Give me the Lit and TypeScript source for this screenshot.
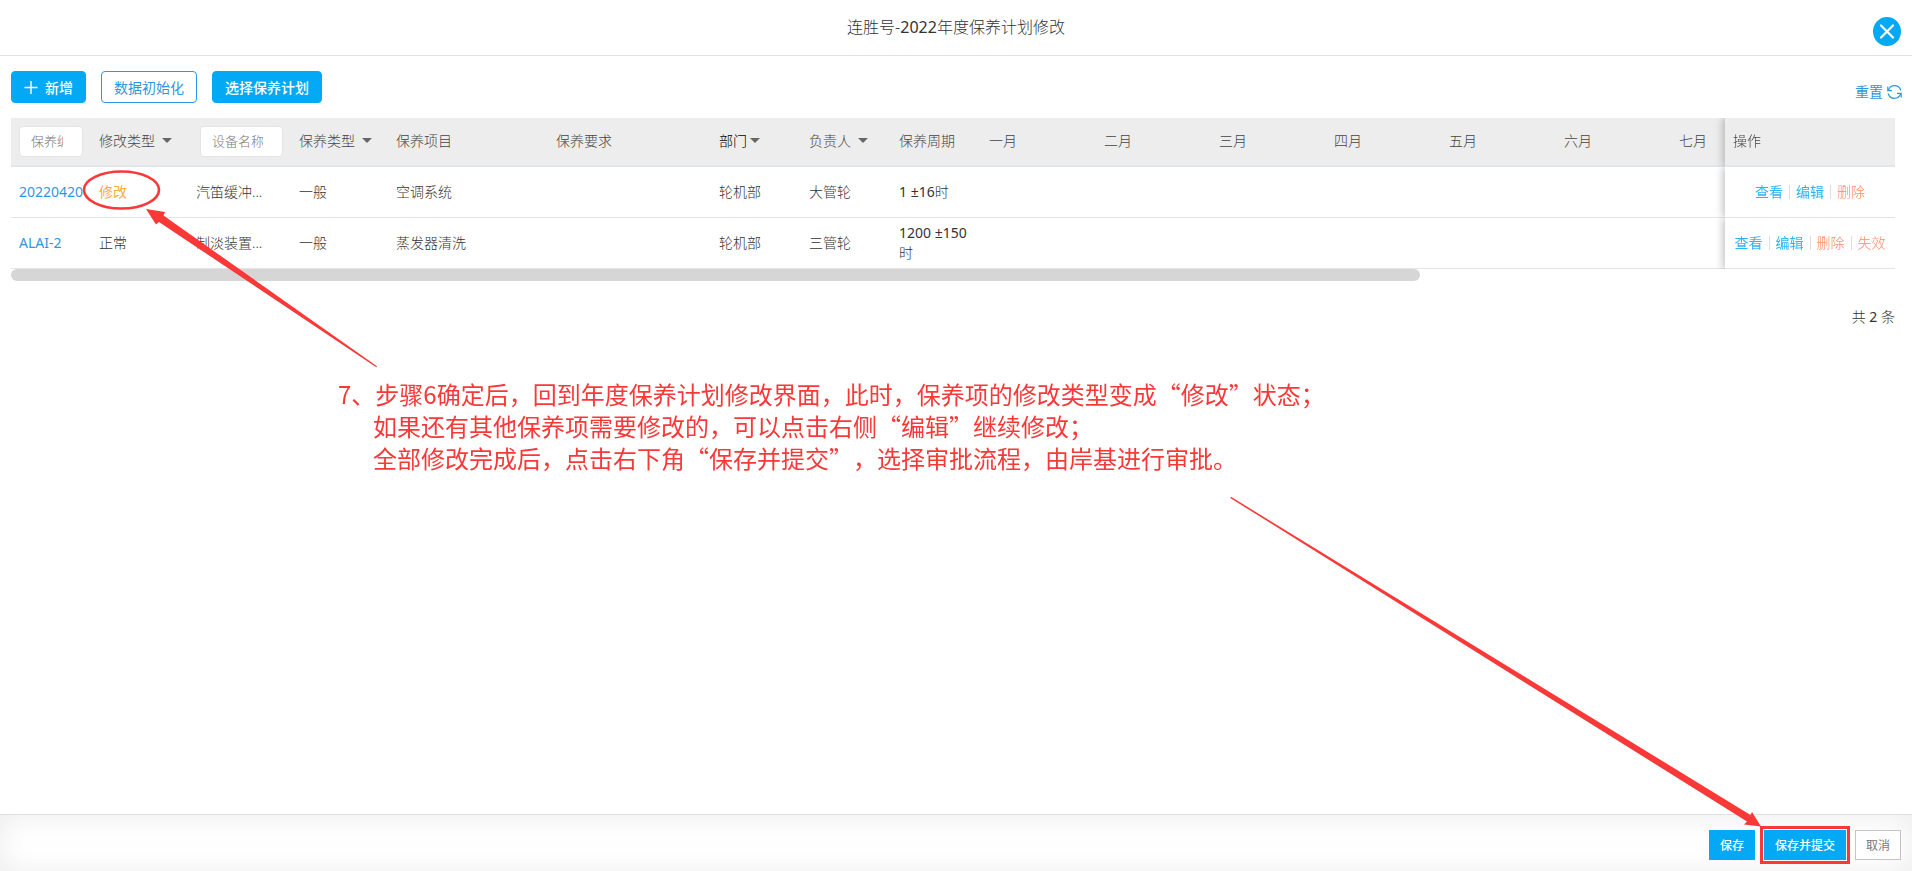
import { LitElement, html, css, svg } from "lit";
import { customElement, state } from "lit/decorators.js";
import { classMap } from "lit/directives/class-map.js";

interface Column {
  label: string;
  width: number;
  kind?: "input" | "menu";
  strong?: boolean;
}

interface PlanRow {
  code: string;
  change: string;
  changed: boolean;
  device: string;
  type: string;
  item: string;
  demand: string;
  dept: string;
  owner: string;
  cycle: string;
  unit: string;
  actions: string[];
}

const MONTHS = ["一月", "二月", "三月", "四月", "五月", "六月", "七月", "八月", "九月", "十月", "十一月", "十二月"];

const COLUMNS: Column[] = [
  { label: "保养编号", width: 80, kind: "input" },
  { label: "修改类型", width: 97, kind: "menu" },
  { label: "设备名称", width: 103, kind: "input" },
  { label: "保养类型", width: 97, kind: "menu" },
  { label: "保养项目", width: 160 },
  { label: "保养要求", width: 163 },
  { label: "部门", width: 90, kind: "menu", strong: true },
  { label: "负责人", width: 90, kind: "menu" },
  { label: "保养周期", width: 90 },
  ...MONTHS.map((label) => ({ label, width: 115 })),
];

const ACTION_WIDTH = 170;
const TABLE_WIDTH = COLUMNS.reduce((sum, c) => sum + c.width, ACTION_WIDTH);

const ROWS: PlanRow[] = [
  {
    code: "20220420",
    change: "修改",
    changed: true,
    device: "汽笛缓冲...",
    type: "一般",
    item: "空调系统",
    demand: "",
    dept: "轮机部",
    owner: "大管轮",
    cycle: "1 ±16",
    unit: "时",
    actions: ["查看", "编辑", "删除"],
  },
  {
    code: "ALAI-2",
    change: "正常",
    changed: false,
    device: "制淡装置...",
    type: "一般",
    item: "蒸发器清洗",
    demand: "",
    dept: "轮机部",
    owner: "三管轮",
    cycle: "1200 ±150",
    unit: "时",
    actions: ["查看", "编辑", "删除", "失效"],
  },
];

@customElement("plan-table")
export class PlanTable extends LitElement {
  @state() private ratio = 1;
  @state() private offset = 0;
  private observer?: ResizeObserver;

  static styles = css`
    :host {
      display: block;
    }
    .viewport {
      overflow-x: auto;
      scrollbar-width: none;
    }
    table {
      table-layout: fixed;
      border-collapse: separate;
      border-spacing: 0;
      line-height: 20px;
    }
    th,
    td {
      box-sizing: border-box;
      padding: 0 8px;
      text-align: left;
      font-weight: 300;
      overflow: hidden;
      white-space: nowrap;
      background: #fff;
    }
    th {
      height: 49px;
      padding-bottom: 2px;
      background: #ededed;
      border-bottom: 2px solid #e1e6eb;
      color: #444;
    }
    td {
      height: 51px;
      border-bottom: 1px solid #e2e4e6;
    }
    .input-head {
      padding-bottom: 0;
    }
    .device-filter {
      padding-left: 12px;
    }
    .cycle {
      white-space: normal;
    }
    .figure {
      font-weight: 400;
      color: #333;
    }
    .pinned {
      position: sticky;
      right: 0;
      overflow: visible;
      box-shadow: -2px 0 8px rgba(0, 0, 0, 0.25);
      clip-path: inset(0 0 0 -12px);
    }
    .filter {
      box-sizing: border-box;
      display: block;
      width: 100%;
      height: 31px;
      padding: 0 19px 2px 11px;
      border: 1px solid #e2e4e6;
      border-radius: 4px;
      background: #fff;
      font: inherit;
      font-size: 13px;
      color: #555;
    }
    .device-filter .filter {
      width: 83px;
    }
    .filter::placeholder {
      color: #777;
      opacity: 1;
    }
    .menu {
      display: flex;
      align-items: center;
      gap: 7px;
      padding: 0;
      border: 0;
      background: none;
      font: inherit;
      color: inherit;
    }
    .menu.strong {
      gap: 3px;
      color: #000;
    }
    .caret {
      border: 5px solid transparent;
      border-top-color: #666;
      border-bottom: 0;
    }
    .code {
      color: #2f96e0;
      font-weight: 400;
      text-decoration: none;
    }
    .changed {
      color: #fbad33;
      font-weight: 400;
    }
    .actions {
      display: flex;
      justify-content: center;
      align-items: center;
    }
    .actions a {
      padding: 0 6px;
      color: #2bb5f6;
      font-weight: 400;
      text-decoration: none;
    }
    .actions a + a {
      background: linear-gradient(#ddd, #ddd) left center / 1px 14px no-repeat;
      padding-left: 7px;
    }
    .actions .danger {
      color: #ff8a65;
      font-weight: 300;
    }
    .track {
      height: 12px;
    }
    .thumb {
      height: 12px;
      border-radius: 6px;
      background: #d6d6d6;
    }
  `;

  firstUpdated() {
    const view = this.viewport;
    this.observer = new ResizeObserver(() => this.measure());
    this.observer.observe(view);
  }

  disconnectedCallback() {
    this.observer?.disconnect();
    super.disconnectedCallback();
  }

  private get viewport() {
    return this.renderRoot.querySelector(".viewport") as HTMLElement;
  }

  private measure() {
    const view = this.viewport;
    this.ratio = Math.min(1, view.clientWidth / view.scrollWidth);
    this.offset = view.scrollLeft / view.scrollWidth;
  }

  private header(col: Column) {
    if (col.kind === "input") {
      return html`<th class=${classMap({ "input-head": true, "device-filter": col.label === "设备名称" })}>
        <input class="filter" type="text" placeholder=${col.label} aria-label=${col.label} />
      </th>`;
    }
    if (col.kind === "menu") {
      return html`<th>
        <button class=${classMap({ menu: true, strong: !!col.strong })} aria-haspopup="listbox">
          ${col.label}<span class="caret"></span>
        </button>
      </th>`;
    }
    return html`<th>${col.label}</th>`;
  }

  render() {
    return html`
      <div class="viewport" @scroll=${this.measure}>
        <table style="width:${TABLE_WIDTH}px">
          <colgroup>
            ${COLUMNS.map((c) => html`<col style="width:${c.width}px" />`)}
            <col style="width:${ACTION_WIDTH}px" />
          </colgroup>
          <thead>
            <tr>
              ${COLUMNS.map((c) => this.header(c))}
              <th class="pinned">操作</th>
            </tr>
          </thead>
          <tbody>
            ${ROWS.map(
              (r) => html`<tr>
                <td><a class="code" href="#">${r.code}</a></td>
                <td><span class=${classMap({ changed: r.changed })}>${r.change}</span></td>
                <td>${r.device}</td>
                <td>${r.type}</td>
                <td>${r.item}</td>
                <td>${r.demand}</td>
                <td>${r.dept}</td>
                <td>${r.owner}</td>
                <td class="cycle"><span class="figure">${r.cycle}</span>${r.unit}</td>
                ${MONTHS.map(() => html`<td></td>`)}
                <td class="pinned">
                  <div class="actions">
                    ${r.actions.map(
                      (a, i) => html`<a href="#" class=${classMap({ danger: i > 1 })}>${a}</a>`
                    )}
                  </div>
                </td>
              </tr>`
            )}
          </tbody>
        </table>
      </div>
      <div class="track">
        <div class="thumb" style="width:${this.ratio * 100}%;margin-left:${this.offset * 100}%"></div>
      </div>
    `;
  }
}

@customElement("guide-note")
export class GuideNote extends LitElement {
  static styles = css`
    :host {
      position: absolute;
      inset: 0;
      overflow: hidden;
      pointer-events: none;
      color: #f93838;
    }
    .marks {
      position: absolute;
      top: 0;
      left: 0;
      width: 1912px;
      height: 871px;
    }
    .text {
      position: absolute;
      top: 378px;
      left: 338px;
      margin: 0;
      padding-left: 35px;
      text-indent: -35px;
      font-family: "Noto Sans CJK SC", sans-serif;
      font-size: 24px;
      font-weight: 400;
      line-height: 32px;
      white-space: nowrap;
      text-spacing-trim: space-all;
    }
    .line {
      display: block;
      text-indent: 0;
    }
  `;

  render() {
    return html`
      <svg class="marks" viewBox="0 0 1912 871" aria-hidden="true">
        ${svg`
          <ellipse cx="121.5" cy="190" rx="37.5" ry="18.5" fill="none" stroke="currentColor" stroke-width="2.6" />
          <path fill="currentColor" d="M146 209 L165 212 L163.500 215.500 L377 366.300 L376.300 367.300 L159 222 L156 224.500 Z" />
          <path fill="currentColor" d="M1761 826.500 L1744 824.500 L1747 821.500 L1230.300 498 L1231 496.800 L1750.500 815 L1752 812 Z" />
        `}
      </svg>
      <p class="text" lang="zh-CN">
        7、步骤6确定后，回到年度保养计划修改界面，此时，保养项的修改类型变成“修改”状态；
        <span class="line">如果还有其他保养项需要修改的，可以点击右侧“编辑”继续修改；</span>
        <span class="line">全部修改完成后，点击右下角“保存并提交”，选择审批流程，由岸基进行审批。</span>
      </p>
    `;
  }
}

@customElement("app-root")
export class AppRoot extends LitElement {
  static styles = css`
    :host {
      position: relative;
      display: flex;
      flex-direction: column;
      min-height: 100vh;
      background: #fff;
      color: #333;
      font-family: "Noto Sans", "Noto Sans CJK SC", sans-serif;
      font-size: 14px;
      font-weight: 300;
      line-height: 20px;
    }
    button {
      font: inherit;
      white-space: nowrap;
    }
    .figure {
      font-weight: 400;
    }
    .head {
      display: grid;
      grid-template-columns: 1fr auto 1fr;
      align-items: center;
      box-sizing: border-box;
      height: 56px;
      padding: 0 11px;
      border-bottom: 1px solid #e2e2e2;
    }
    .title {
      grid-column: 2;
      margin: 0;
      padding-bottom: 2px;
      font-size: 16px;
      font-weight: 300;
      line-height: 24px;
    }
    .close {
      justify-self: end;
      display: flex;
      margin-top: 8px;
      padding: 0;
      border: 0;
      background: none;
    }
    .body {
      flex: 1;
      padding: 15px 17px 15px 11px;
    }
    .toolbar {
      display: flex;
      gap: 15px;
      margin-bottom: 15px;
    }
    .tool {
      display: flex;
      align-items: center;
      gap: 7px;
      height: 32px;
      padding: 1px 12px 0;
      border: 1px solid #03a9f4;
      border-radius: 4px;
      background: #03a9f4;
      color: #fff;
      font-weight: 500;
    }
    .tool.plain {
      border-color: #2f96e0;
      background: #fff;
      color: #2f96e0;
      font-weight: 400;
    }
    .reset {
      display: flex;
      align-items: center;
      align-self: flex-end;
      gap: 4px;
      margin-left: auto;
      margin-right: -7px;
      padding-bottom: 1px;
      color: #2f96e0;
      font-weight: 400;
      text-decoration: none;
    }
    .total {
      margin: 26px 0 0;
      text-align: right;
    }
    .foot {
      display: flex;
      justify-content: flex-end;
      gap: 9px;
      box-sizing: border-box;
      height: 57px;
      padding: 15px 11px 0;
      border-top: 1px solid #e0e0e0;
      box-shadow: inset 0 2px 30px rgba(0, 0, 0, 0.08);
    }
    .action {
      height: 30px;
      padding: 1px 10px 0;
      border: 1px solid #03a9f4;
      background: #03a9f4;
      color: #fff;
      font-size: 12px;
      font-weight: 500;
    }
    .action.marked {
      outline: 3px solid #f93838;
      outline-offset: 1px;
    }
    .action.plain {
      border-color: #c4c4c8;
      background: #fff;
      color: #777;
      font-weight: 400;
    }
  `;

  render() {
    return html`
      <header class="head">
        <h1 class="title">连胜号-<span class="figure">2022</span>年度保养计划修改</h1>
        <button class="close" aria-label="关闭">
          <svg width="28" height="29" viewBox="0 0 28 29">
            <ellipse cx="14" cy="14.500" rx="14" ry="14.500" fill="#03a9f4" />
            <path d="M8 8.500 L20 20.500 M20 8.500 L8 20.500" stroke="#fff" stroke-width="2.200" stroke-linecap="round" />
          </svg>
        </button>
      </header>
      <main class="body">
        <div class="toolbar">
          <button class="tool">
            <svg width="14" height="14" viewBox="0 0 14 14" aria-hidden="true">
              <path d="M7 0 V13 M0.500 6.500 H13.500" stroke="#fff" stroke-width="1.400" />
            </svg>
            新增
          </button>
          <button class="tool plain">数据初始化</button>
          <button class="tool">选择保养计划</button>
          <a class="reset" href="#">
            重置
            <svg width="15" height="14" viewBox="0 0 15 14" fill="none" stroke="#2f96e0" stroke-width="1.200" aria-hidden="true">
              <path d="M1.200 5.500 C2.500 2 5 0.700 7.500 0.700 C10.500 0.700 13 2.500 13.800 5.500" />
              <path d="M13.800 8.500 C12.500 12 10 13.300 7.500 13.300 C4.500 13.300 2 11.500 1.200 8.500" />
              <path d="M0.800 1.500 V5.600 H5" />
              <path d="M14.200 12.500 V8.400 H10" />
            </svg>
          </a>
        </div>
        <plan-table></plan-table>
        <p class="total">共 <span class="figure">2</span> 条</p>
      </main>
      <footer class="foot">
        <button class="action">保存</button>
        <button class="action marked">保存并提交</button>
        <button class="action plain">取消</button>
      </footer>
      <guide-note></guide-note>
    `;
  }
}
